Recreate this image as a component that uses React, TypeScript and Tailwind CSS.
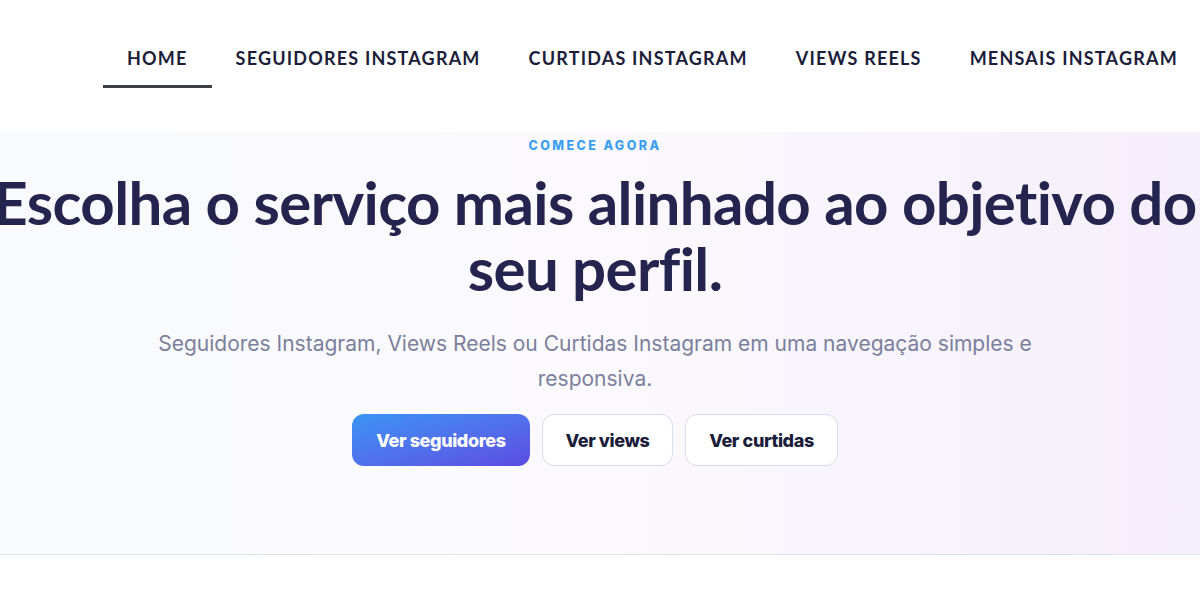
export default function App() {
  const links = ["HOME", "SEGUIDORES INSTAGRAM", "CURTIDAS INSTAGRAM", "VIEWS REELS", "MENSAIS INSTAGRAM"];

  return (
    <div className="h-[600px] w-[1200px] overflow-hidden bg-white">
      <header className="flex h-[132px] items-start bg-white pl-[103px] pt-[45px]">
        <nav className="flex font-['Lato',sans-serif]">
          {links.map((l, i) => (
            <a
              key={l}
              className={
                "px-6 pb-[13px] text-[18px] font-bold tracking-[1.2px] text-[#1b1d3a] whitespace-nowrap " +
                (i === 0 ? "border-b-[3px] border-[#3c3f46]" : "border-b-[3px] border-transparent")
              }
            >
              {l}
            </a>
          ))}
        </nav>
      </header>

      <section className="flex h-[423px] flex-col items-center border-b border-[#dde1ea] bg-gradient-to-r from-[#f8fafd] via-[#fbf9fd] to-[#f5eefb] pr-[10px] pt-[5px]">
        <span className="font-['Inter',sans-serif] text-[12.5px] leading-[18px] font-extrabold tracking-[2.4px] text-[#3a9ff0]">COMECE AGORA</span>
        <h1 className="mt-[14px] w-[1300px] shrink-0 text-center font-['Lato',sans-serif] text-[60px] leading-[66px] font-bold tracking-[-0.6px] whitespace-nowrap text-[#25244f]">
          Escolha o serviço mais alinhado ao objetivo do
          <br />
          seu perfil.
        </h1>
        <p className="mt-[25px] w-[900px] text-center font-['Inter',sans-serif] text-[21px] leading-[35px] text-[#7b809b]">
          Seguidores Instagram, Views Reels ou Curtidas Instagram em uma navegação simples e responsiva.
        </p>
        <div className="mt-[18px] flex gap-3 font-['Inter',sans-serif] text-[18px] font-extrabold tracking-[-0.4px]">
          <button className="h-[52px] w-[178px] rounded-xl bg-gradient-to-br from-[#3794f4] to-[#5b4ae3] text-white">Ver seguidores</button>
          <button className="h-[52px] w-[131px] rounded-xl border border-[#d6ddef] bg-white text-[#1b1d3a]">Ver views</button>
          <button className="h-[52px] w-[153px] rounded-xl border border-[#d6ddef] bg-white text-[#1b1d3a]">Ver curtidas</button>
        </div>
      </section>
    </div>
  );
}
